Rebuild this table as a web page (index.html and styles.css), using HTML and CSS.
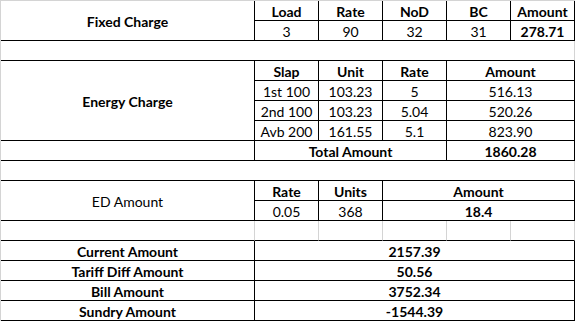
FILE: index.html
```html
<!DOCTYPE html>
<html>
<head>
<meta charset="utf-8">
<link rel="stylesheet" href="styles.css">
</head>
<body>
<div class="sheet">
  <div class="c b label-fixed">Fixed Charge</div>
  <div class="c b">Load</div>
  <div class="c b">Rate</div>
  <div class="c b">NoD</div>
  <div class="c b">BC</div>
  <div class="c b">Amount</div>
  <div class="c">3</div>
  <div class="c">90</div>
  <div class="c">32</div>
  <div class="c">31</div>
  <div class="c b">278.71</div>

  <div class="gap"></div>

  <div class="c b label-energy">Energy Charge</div>
  <div class="c b">Slap</div>
  <div class="c b">Unit</div>
  <div class="c b">Rate</div>
  <div class="c b span2">Amount</div>
  <div class="c">1st 100</div>
  <div class="c">103.23</div>
  <div class="c">5</div>
  <div class="c span2">516.13</div>
  <div class="c">2nd 100</div>
  <div class="c">103.23</div>
  <div class="c">5.04</div>
  <div class="c span2">520.26</div>
  <div class="c">Avb 200</div>
  <div class="c">161.55</div>
  <div class="c">5.1</div>
  <div class="c span2">823.90</div>
  <div class="c"></div>
  <div class="c b span3">Total Amount</div>
  <div class="c b span2">1860.28</div>

  <div class="gap"></div>

  <div class="c label-ed">ED Amount</div>
  <div class="c b">Rate</div>
  <div class="c b">Units</div>
  <div class="c b span3">Amount</div>
  <div class="c">0.05</div>
  <div class="c">368</div>
  <div class="c b span3">18.4</div>

  <div class="blank"></div>
  <div class="blank"></div>
  <div class="blank"></div>
  <div class="blank"></div>
  <div class="blank"></div>
  <div class="blank"></div>

  <div class="c b">Current Amount</div>
  <div class="c b span5">2157.39</div>
  <div class="c b">Tariff Diff Amount</div>
  <div class="c b span5">50.56</div>
  <div class="c b">Bill Amount</div>
  <div class="c b span5">3752.34</div>
  <div class="c b">Sundry Amount</div>
  <div class="c b span5">-1544.39</div>
</div>
</body>
</html>
```

FILE: styles.css
```css
html, body {
  margin: 0;
  padding: 0;
  background: #ffffff;
}

.sheet {
  display: grid;
  grid-template-columns: 254px repeat(5, 64px);
  grid-template-rows: repeat(16, 20px);
  width: 574px;
  border-top: 1px solid #d4d4d4;
  border-left: 1px solid #d4d4d4;
  font-family: Lato, "Liberation Sans", sans-serif;
  font-size: 14px;
  color: #000000;
}

.c {
  box-sizing: border-box;
  border-right: 1px solid #000000;
  border-bottom: 1px solid #000000;
  display: flex;
  align-items: center;
  justify-content: center;
  line-height: 19px;
  padding-top: 1px;
  white-space: nowrap;
  overflow: hidden;
}

.b {
  font-weight: bold;
}

.label-fixed {
  grid-row: span 2;
}

.label-energy {
  grid-row: span 4;
}

.label-ed {
  grid-row: span 2;
}

.span2 {
  grid-column: span 2;
}

.span3 {
  grid-column: span 3;
}

.span5 {
  grid-column: span 5;
}

.gap {
  grid-column: 1 / -1;
  box-sizing: border-box;
  border-right: 1px solid #d4d4d4;
  border-bottom: 1px solid #000000;
}

.blank {
  box-sizing: border-box;
  border-right: 1px solid #d4d4d4;
  border-bottom: 1px solid #000000;
}
```
